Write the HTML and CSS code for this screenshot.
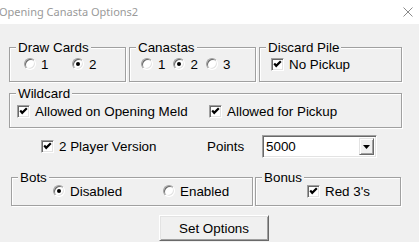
FILE: index.html
```html
<!DOCTYPE html>
<html>
<head>
<meta charset="utf-8">
<link rel="stylesheet" href="styles.css">
</head>
<body>
<div class="titlebar">
  <span class="title">Opening Canasta Options2</span>
  <svg class="close" width="10" height="10" viewBox="0 0 10 10"><path d="M0.5 0.5 L9.5 9.5 M9.5 0.5 L0.5 9.5" stroke="#8a8a8a" stroke-width="1" fill="none"/></svg>
</div>
<div class="dialog">
  <div class="row row1">
    <div class="group g-draw">
      <span class="cap">Draw Cards</span>
      <div class="opts pad-draw">
        <label class="opt w48"><span class="radio"></span>1</label>
        <label class="opt"><span class="radio on"></span>2</label>
      </div>
    </div>
    <div class="group g-can">
      <span class="cap">Canastas</span>
      <div class="opts pad-can">
        <label class="opt"><span class="radio"></span>1</label>
        <label class="opt"><span class="radio on"></span>2</label>
        <label class="opt"><span class="radio"></span>3</label>
      </div>
    </div>
    <div class="group g-disc">
      <span class="cap">Discard Pile</span>
      <div class="opts pad-disc">
        <label class="opt"><span class="check on"><svg width="9" height="9" viewBox="0 0 9 9"><path d="M1.2 3.6 L3.2 5.8 L7.8 1.2" stroke="#000" stroke-width="2.2" fill="none"/></svg></span>No Pickup</label>
      </div>
    </div>
  </div>

  <div class="group g-wild">
    <span class="cap">Wildcard</span>
    <div class="opts pad-wild">
      <label class="opt w192"><span class="check on"><svg width="9" height="9" viewBox="0 0 9 9"><path d="M1.2 3.6 L3.2 5.8 L7.8 1.2" stroke="#000" stroke-width="2.2" fill="none"/></svg></span>Allowed on Opening Meld</label>
      <label class="opt"><span class="check on"><svg width="9" height="9" viewBox="0 0 9 9"><path d="M1.2 3.6 L3.2 5.8 L7.8 1.2" stroke="#000" stroke-width="2.2" fill="none"/></svg></span>Allowed for Pickup</label>
    </div>
  </div>

  <div class="row row3">
    <label class="opt w166"><span class="check on"><svg width="9" height="9" viewBox="0 0 9 9"><path d="M1.2 3.6 L3.2 5.8 L7.8 1.2" stroke="#000" stroke-width="2.2" fill="none"/></svg></span>2 Player Version</label>
    <span class="points">Points</span>
    <div class="combo">
      <span class="combo-text">5000</span>
      <span class="combo-btn"><svg width="7" height="4" viewBox="0 0 7 4"><path d="M0 0 H7 L3.5 4 Z" fill="#000"/></svg></span>
    </div>
  </div>

  <div class="row row4">
    <div class="group g-bots">
      <span class="cap">Bots</span>
      <div class="opts pad-bots">
        <label class="opt w110"><span class="radio on"></span>Disabled</label>
        <label class="opt"><span class="radio"></span>Enabled</label>
      </div>
    </div>
    <div class="group g-bonus">
      <span class="cap">Bonus</span>
      <div class="opts pad-bonus">
        <label class="opt"><span class="check on"><svg width="9" height="9" viewBox="0 0 9 9"><path d="M1.2 3.6 L3.2 5.8 L7.8 1.2" stroke="#000" stroke-width="2.2" fill="none"/></svg></span>Red 3's</label>
      </div>
    </div>
  </div>

  <div class="row row5">
    <button class="btn">Set Options</button>
  </div>
</div>
</body>
</html>
```

FILE: styles.css
```css
html, body {
  margin: 0;
  padding: 0;
}
body {
  width: 419px;
  height: 242px;
  overflow: hidden;
  background: #f0f0f0;
  font-family: "Liberation Sans", Arial, sans-serif;
  font-size: 13.4px;
  color: #000;
}
.titlebar {
  height: 24px;
  background: #fff;
  display: flex;
  align-items: center;
  justify-content: space-between;
}
.title {
  font-family: "Noto Sans", "Open Sans", sans-serif;
  font-size: 11px;
  color: #9a9a9a;
  margin-left: -1px;
  margin-top: -1px;
}
.close {
  margin-right: 6px;
  margin-top: -1px;
}
.dialog {
  padding-left: 9px;
}
.row {
  display: flex;
}
.row1 {
  margin-top: 23px;
  gap: 3px;
}
.group {
  box-sizing: border-box;
  border: 1px solid #a0a0a0;
  box-shadow: inset 1px 1px 0 #fff, 1px 1px 0 #fff;
}
.cap {
  display: block;
  width: max-content;
  margin: -8px 0 0 6px;
  padding: 0 2px;
  background: #f0f0f0;
  line-height: 15px;
}
.g-draw { width: 117px; height: 35px; }
.g-can { width: 127px; height: 35px; }
.g-disc { width: 143px; height: 35px; }
.g-wild { width: 393px; height: 35px; margin-top: 11px; }
.opts {
  display: flex;
  align-items: center;
  height: 16px;
  margin-top: 1px;
}
.pad-draw { padding-left: 14px; }
.pad-can { padding-left: 11px; gap: 8px; }
.pad-disc { padding-left: 11px; }
.pad-wild { padding-left: 7px; margin-top: 2px; }
.pad-bots { padding-left: 41px; margin-top: -2px; }
.pad-bonus { padding-left: 51px; margin-top: -2px; }
.opt {
  display: flex;
  align-items: center;
  line-height: 15px;
  white-space: nowrap;
}
.w48 { width: 48px; }
.w192 { width: 192px; }
.w166 { width: 166px; }
.w110 { width: 110px; }
.radio {
  box-sizing: border-box;
  width: 12px;
  height: 12px;
  border-radius: 50%;
  background: #fff;
  border: 1px solid;
  border-color: #a0a0a0 #fff #fff #a0a0a0;
  box-shadow: inset 1px 1px 0 #696969, inset -1px -1px 0 #e3e3e3;
  margin-right: 5px;
  display: flex;
  align-items: center;
  justify-content: center;
}
.radio.on::after {
  content: "";
  width: 4px;
  height: 4px;
  border-radius: 50%;
  background: #000;
}
.check {
  box-sizing: border-box;
  width: 13px;
  height: 13px;
  background: #fff;
  border: 1px solid;
  border-color: #a0a0a0 #fff #fff #a0a0a0;
  box-shadow: inset 1px 1px 0 #696969, inset -1px -1px 0 #e3e3e3;
  margin-right: 5px;
  display: flex;
  align-items: center;
  justify-content: center;
}
.check svg {
  display: block;
}
.row3 {
  margin-top: 7px;
  align-items: center;
  padding-left: 32px;
  height: 23px;
}
.points {
  width: 55px;
  line-height: 15px;
}
.combo {
  box-sizing: border-box;
  width: 115px;
  height: 23px;
  background: #fff;
  border: 1px solid;
  border-color: #a0a0a0 #fff #fff #a0a0a0;
  box-shadow: inset 1px 1px 0 #696969, inset -1px -1px 0 #e3e3e3;
  display: flex;
  align-items: center;
  justify-content: space-between;
  padding: 2px;
}
.combo-text {
  line-height: 15px;
  padding-left: 1px;
}
.combo-btn {
  box-sizing: border-box;
  width: 15px;
  height: 17px;
  background: #f0f0f0;
  border: 1px solid;
  border-color: #e3e3e3 #696969 #696969 #e3e3e3;
  box-shadow: inset 1px 1px 0 #fff, inset -1px -1px 0 #a0a0a0;
  display: flex;
  align-items: center;
  justify-content: center;
}
.combo-btn svg {
  display: block;
}
.row4 {
  margin-top: 19px;
  padding-left: 2px;
  gap: 2px;
}
.g-bots { width: 242px; height: 29px; }
.g-bonus { width: 146px; height: 29px; }
.row5 {
  margin-top: 9px;
  padding-left: 150px;
}
.btn {
  box-sizing: border-box;
  width: 110px;
  height: 26px;
  font-family: "Liberation Sans", Arial, sans-serif;
  font-size: 13.4px;
  color: #000;
  background: #f0f0f0;
  border: 1px solid;
  border-color: #fff #696969 #696969 #fff;
  box-shadow: inset 1px 1px 0 #e3e3e3, inset -1px -1px 0 #a0a0a0;
  padding: 0;
  margin: 0;
}
```
